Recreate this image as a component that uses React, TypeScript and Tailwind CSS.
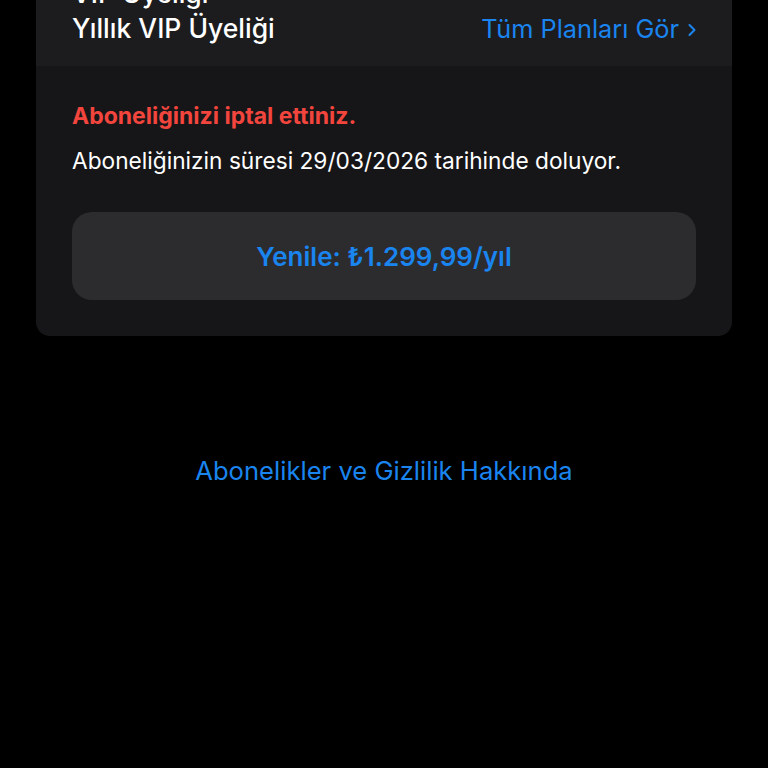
import { ChevronRight } from "lucide-react";

const App = () => {
  return (
    <div className="min-h-[768px] bg-black px-[36px] font-['Inter','Noto_Sans',sans-serif] overflow-hidden">
      <div className="-mt-[40px] rounded-b-[14px] overflow-hidden">
        <div className="bg-[#1c1c1e] px-[36px] pt-[16px] pb-[20px] flex items-end justify-between">
          <div className="text-white text-[26.5px] leading-[35px] font-medium">
            <p>VIP Üyeliği</p>
            <p>Yıllık VIP Üyeliği</p>
          </div>
          <a href="#" className="text-[#1a84ef] text-[25.3px] leading-[35px] flex items-center gap-[3px] -mr-[6px]">
            <span>Tüm Planları Gör</span>
            <ChevronRight className="w-[20px] h-[22px] mt-[3px]" strokeWidth={2.5} />
          </a>
        </div>
        <div className="bg-[#161618] px-[36px] pt-[36px] pb-[36px]">
          <p className="text-[#f2453d] text-[23px] leading-[28px] font-bold">Aboneliğinizi iptal ettiniz.</p>
          <p className="text-white text-[22.7px] leading-[30px] mt-[16px]">
            Aboneliğinizin süresi 29/03/2026 tarihinde doluyor.
          </p>
          <button className="mt-[36px] w-full h-[88px] rounded-[20px] bg-[#2c2c2e] text-[#1a84ef] text-[26px] font-semibold">
            Yenile: ₺1.299,99/yıl
          </button>
        </div>
      </div>
      <div className="mt-[119px] text-center">
        <a href="#" className="text-[#1a84ef] text-[25.6px] leading-[32px]">
          Abonelikler ve Gizlilik Hakkında
        </a>
      </div>
    </div>
  );
};

export default App;
